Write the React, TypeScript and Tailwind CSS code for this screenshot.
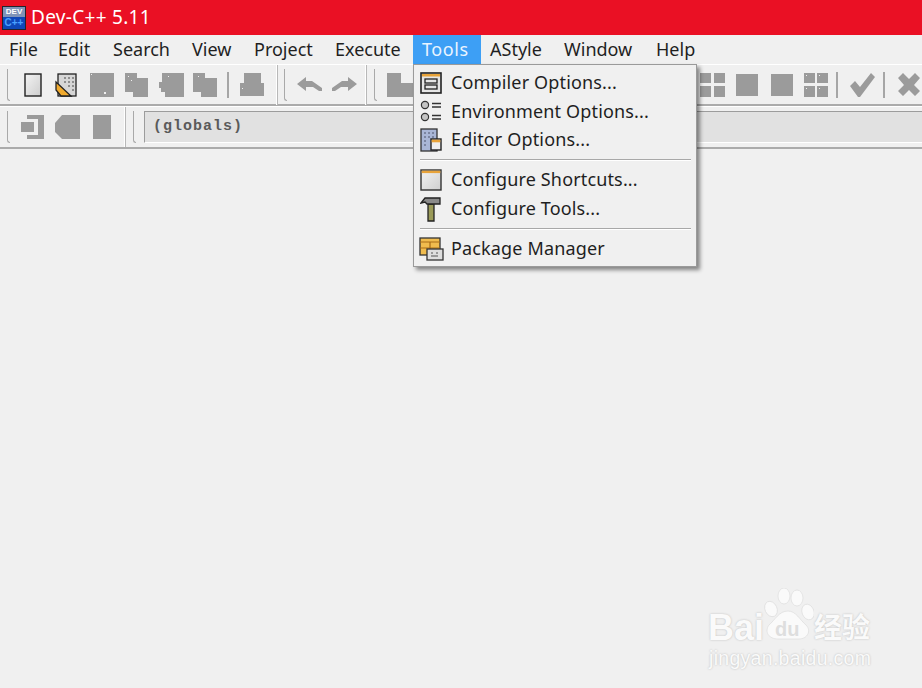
import React from "react";

const G = "#9b9b9b";

function Gray({ w, h = 24, d, ml }: { w: number; h?: number; d: string; ml: string }) {
  return (
    <svg width={w} height={h} viewBox={`0 0 ${w} ${h}`} className={`shrink-0 ${ml}`}>
      <path d={d} fill={G} fillRule="evenodd" />
    </svg>
  );
}

function Grip({ ml = "ml-[7px]" }: { ml?: string }) {
  return <div className={`${ml} w-[3px] h-[32px] shrink-0 border-l border-b border-[#a9a9a9] rounded-bl-sm`} />;
}

function VSep({ ml }: { ml: string }) {
  return <div className={`${ml} w-[2px] h-[26px] bg-[#a6a6a6] shrink-0`} />;
}

function AppIcon() {
  return (
    <div className="w-[24px] h-[24px] shrink-0 bg-[#1b2f6e] border border-[#20242e] flex flex-col items-center overflow-hidden">
      <div className="w-full h-[10px] bg-[#7f93b8] text-white text-[8px] leading-[10px] font-bold text-center font-['Liberation_Sans',sans-serif]">DEV</div>
      <div className="w-full flex-1 bg-[#0f47b8] text-[#4aa0ff] text-[10px] leading-[12px] font-bold text-center font-['Liberation_Sans',sans-serif]">C++</div>
    </div>
  );
}

function IconCompiler() {
  return (
    <svg width="22" height="22" viewBox="0 0 22 22">
      <rect x="1" y="1" width="20" height="20" fill="#e6e6e6" stroke="#222" strokeWidth="1.6" />
      <rect x="2" y="2" width="18" height="2.5" fill="#e8a33a" />
      <rect x="5" y="7" width="12" height="4" fill="none" stroke="#222" strokeWidth="1.3" />
      <rect x="5" y="13" width="12" height="4" fill="none" stroke="#222" strokeWidth="1.3" />
    </svg>
  );
}
function IconEnv() {
  return (
    <svg width="24" height="24" viewBox="0 0 24 24">
      <circle cx="6" cy="6" r="3.6" fill="#c4c4c4" stroke="#333" strokeWidth="1.2" />
      <circle cx="6" cy="18" r="3.6" fill="#c4c4c4" stroke="#333" strokeWidth="1.2" />
      <path d="M13 4.5h9M13 8h9M13 16.5h9M13 20h9" stroke="#333" strokeWidth="1.5" />
    </svg>
  );
}
function IconEditor() {
  return (
    <svg width="22" height="24" viewBox="0 0 22 24">
      <rect x="1" y="1" width="16" height="22" fill="#a9b6d6" stroke="#333" strokeWidth="1.3" />
      <path d="M4 5h2M8 5h2M12 5h2M4 9h2M8 9h2M12 9h2M4 13h2M4 17h2" stroke="#6c7590" strokeWidth="1.4" />
      <rect x="11" y="11" width="10" height="11" fill="#eee" stroke="#222" strokeWidth="1.4" />
      <rect x="11.7" y="11.7" width="8.6" height="2.6" fill="#e8a33a" />
    </svg>
  );
}
function IconWindow() {
  return (
    <svg width="22" height="22" viewBox="0 0 22 22">
      <defs>
        <linearGradient id="wg" x1="0" y1="0" x2="1" y2="1">
          <stop offset="0" stopColor="#f2f2f2" />
          <stop offset="1" stopColor="#cfcfcf" />
        </linearGradient>
      </defs>
      <rect x="1" y="1" width="20" height="20" fill="url(#wg)" stroke="#333" strokeWidth="1.4" />
      <rect x="1.7" y="1.7" width="18.6" height="2.4" fill="#e8a33a" />
    </svg>
  );
}
function IconHammer() {
  return (
    <svg width="22" height="26" viewBox="0 0 22 26">
      <path d="M8 8 H14 V25 H8 Z" fill="#9a9a58" stroke="#222" strokeWidth="1.3" />
      <path d="M1 7 L5 2 H20 V8 H7 L5 6 Z" fill="#8a8a8a" stroke="#222" strokeWidth="1.3" />
    </svg>
  );
}
function IconPackage() {
  return (
    <svg width="25" height="24" viewBox="0 0 25 24">
      <rect x="1" y="1" width="20" height="17" fill="#f0bc4e" stroke="#333" strokeWidth="1.3" />
      <path d="M1 5h20M1 11h20M11 5v13" stroke="#a86c16" strokeWidth="1.2" />
      <rect x="8" y="12" width="16" height="11" fill="#dedede" stroke="#333" strokeWidth="1.3" />
      <path d="M12 16h2M17 16h2M12 19h7" stroke="#555" strokeWidth="1.2" />
    </svg>
  );
}

const items1 = [
  { label: "Compiler Options...", icon: <IconCompiler /> },
  { label: "Environment Options...", icon: <IconEnv /> },
  { label: "Editor Options...", icon: <IconEditor /> },
];
const items2 = [
  { label: "Configure Shortcuts...", icon: <IconWindow /> },
  { label: "Configure Tools...", icon: <IconHammer /> },
];
const items3 = [{ label: "Package Manager", icon: <IconPackage /> }];

function Row({ label, icon }: { label: string; icon: React.ReactNode }) {
  return (
    <div className="h-[28.6px] flex items-center relative">
      <div className="w-[32px] mr-[4px] flex justify-center shrink-0">{icon}</div>
      <span className="text-[#1f1f1f]">{label}</span>
    </div>
  );
}

function MenuSep() {
  return (
    <div className="h-[11.4px] flex flex-col justify-center px-[5px]">
      <div className="h-[1px] bg-[#a8a8a8]" />
      <div className="h-[1px] bg-white" />
    </div>
  );
}

const menus = [
  { t: "File", w: "w-[49px]" },
  { t: "Edit", w: "w-[55px]" },
  { t: "Search", w: "w-[79px]" },
  { t: "View", w: "w-[62px]" },
  { t: "Project", w: "w-[81px]" },
  { t: "Execute", w: "w-[87px]" },
  { t: "Tools", w: "w-[68px]" },
  { t: "AStyle", w: "w-[74px]" },
  { t: "Window", w: "w-[92px]" },
  { t: "Help", w: "w-[60px]" },
];

export default function App() {
  return (
    <div className="relative w-[922px] h-[688px] overflow-hidden bg-[#f0f0f0] font-['Noto_Sans','Open_Sans',sans-serif] text-[18px] text-[#1f1f1f]">
      <div className="h-[35px] bg-[#ea1024] flex items-center pl-[2px]">
        <AppIcon />
        <span className="ml-[5px] text-white text-[19px] tracking-[0.3px]">Dev-C++ 5.11</span>
      </div>

      <div className="h-[29px] flex items-stretch">
        {menus.map((m) => (
          <div
            key={m.t}
            className={
              m.t === "Tools"
                ? `${m.w} pl-[9px] flex items-center bg-[#3d9ff5] text-[#eaf4ff] tracking-[0.6px]`
                : `${m.w} pl-[9px] flex items-center`
            }
          >
            {m.t}
          </div>
        ))}
      </div>

      <div className="h-[42px] flex items-center border-t border-white border-b-2 border-b-[#ababab] relative">
        <Grip />
        <svg width="18" height="24" viewBox="0 0 18 24" className="ml-[14px] shrink-0">
          <defs>
            <linearGradient id="ng" x1="0" y1="0" x2="1" y2="1">
              <stop offset="0" stopColor="#f4f4f4" />
              <stop offset="1" stopColor="#cdcdcd" />
            </linearGradient>
          </defs>
          <rect x="1" y="1" width="16" height="22" fill="url(#ng)" stroke="#222" strokeWidth="1.4" />
        </svg>
        <svg width="22" height="24" viewBox="0 0 22 24" className="ml-[13px] shrink-0">
          <rect x="3" y="1" width="18" height="22" fill="#d6d6d6" stroke="#222" strokeWidth="1.3" />
          <path d="M9 5h2M13 5h2M17 5h2M9 9h2M13 9h2M17 9h2M13 13h2M17 13h2M17 17h2" stroke="#777" strokeWidth="1.3" />
          <path d="M1 9 L16 23 H6 L1 17 Z" fill="#f0aa2e" stroke="#222" strokeWidth="1.3" />
        </svg>
        <Gray w={24} d="M0 0h24v24h-24zM14 19h2v2h-2zM1 1h1v1h-1z" ml="ml-[13px]" />
        <Gray w={24} d="M0 0h12v5h11v19h-15v-5h-8zM6 7h1v1h-1zM3 3h1v1h-1z" ml="ml-[11px]" />
        <Gray w={25} d="M3 0h22v24h-19v-5h-4v-4h-2v-6h3zM9 3h1v1h-1z" ml="ml-[10px]" />
        <Gray w={24} d="M0 0h12v5h12v19h-16v-5h-8zM5 3h1v1h-1z" ml="ml-[9px]" />
        <VSep ml="ml-[10px]" />
        <Gray w={25} d="M4 0h17v10h3v13h-24v-13h4zM2 15h1v1h-1z" ml="ml-[11px]" />
        <div className="ml-[11px] w-[2px] h-[40px] bg-white border-r border-[#b8b8b8] shrink-0" />
        <Grip ml="ml-[6px]" />
        <Gray w={25} h={16} d="M0 7l9-7v4h6l10 7v3h-3l-6-4h-7v4z" ml="ml-[10px]" />
        <Gray w={25} h={16} d="M25 7l-9-7v4h-6l-10 7v3h3l6-4h7v4z" ml="ml-[10px]" />
        <div className="ml-[8px] w-[2px] h-[40px] bg-white border-r border-[#b8b8b8] shrink-0" />
        <Grip ml="ml-[7px]" />
        <Gray w={26} d="M0 0h14v10h12v14h-26z" ml="ml-[10px]" />

        <div className="ml-auto flex items-center shrink-0 mr-[2px]">
          <Gray w={25} d="M0 0h11v10h-11zM14 0h11v10h-11zM0 13h11v11h-11zM14 13h11v11h-11z" ml="ml-0" />
          <Gray w={22} d="M0 1h22v22h-22z" ml="ml-[11px]" />
          <Gray w={22} d="M0 1h22v22h-22z" ml="ml-[13px]" />
          <Gray w={24} d="M0 0h11v10h-11zM2 2h1v1h-1zM13 0h11v10h-11zM15 2h1v1h-1zM0 13h11v11h-11zM2 15h1v1h-1zM13 13h11v11h-11zM15 15h1v1h-1z" ml="ml-[11px]" />
          <VSep ml="ml-[8px]" />
          <Gray w={25} d="M0 13l5-5 5 6 11-14 4 4-15 20h-2z" ml="ml-[12px]" />
          <VSep ml="ml-[8px]" />
          <Gray w={22} d="M0 5l5-5 6 6 6-6 5 5-6 7 6 6-5 5-6-6-6 6-5-5 6-6z" ml="ml-[13px]" />
        </div>
      </div>

      <div className="h-[43px] flex items-center border-t border-white border-b-2 border-b-[#ababab]">
        <Grip />
        <Gray w={23} d="M6 0h17v24h-17v-4h11v-16h-11zM0 7h13v10h-13z" ml="ml-[11px]" />
        <Gray w={25} d="M7 0h18v24h-18l-7-7v-9z" ml="ml-[11px]" />
        <Gray w={18} d="M0 0h18v24h-18z" ml="ml-[13px]" />
        <div className="ml-[13px] w-[2px] h-[40px] bg-white border-r border-[#b8b8b8] shrink-0" />
        <Grip ml="ml-[7px]" />
        <div className="ml-[8px] flex-1 h-[32px] bg-[#e1e1e1] border-t border-l border-[#9c9c9c] border-b border-b-white flex items-center pl-[8px] font-['Liberation_Mono',monospace] font-bold text-[15px] tracking-[1px] text-[#5a5a5a]">
          (globals)
        </div>
      </div>

      {/* Tools dropdown */}
      <div className="absolute left-[413px] top-[64px] w-[284px] h-[203px] bg-[#f0f0f0] border border-[#9a9a9a] pt-[3.5px] shadow-[3px_3px_4px_rgba(0,0,0,0.45)] tracking-[0.15px] pl-[1px]">
        {items1.map((it) => <Row key={it.label} {...it} />)}
        <MenuSep />
        {items2.map((it) => <Row key={it.label} {...it} />)}
        <MenuSep />
        {items3.map((it) => <Row key={it.label} {...it} />)}
      </div>

      {/* Watermark */}
      <div className="absolute left-[706px] top-[588px] w-[170px] h-[84px] text-[#fafafa] font-['Liberation_Sans',sans-serif] [text-shadow:0_0_2px_rgba(170,170,170,0.8)]">
        <span className="absolute left-[2px] top-[18px] text-[36px] leading-[44px] font-bold">Bai</span>
        <svg width="50" height="52" viewBox="0 0 50 52" className="absolute left-[58px] top-0">
          <g fill="#fafafa" stroke="#dddddd" strokeWidth="0.7">
            <ellipse cx="7" cy="21" rx="6" ry="8" transform="rotate(-25 7 21)" />
            <ellipse cx="20" cy="8" rx="6" ry="8" />
            <ellipse cx="33" cy="10" rx="6" ry="8" />
            <ellipse cx="44" cy="24" rx="6" ry="8" transform="rotate(-20 44 24)" />
            <path d="M24 23c8 0 12 9 18 14 6 6 1 14-7 14H14C5 51 0 44 5 37c6-5 10-14 19-14z" />
          </g>
        </svg>
        <span className="absolute left-[69px] top-[29px] text-[20px] leading-[24px] font-bold text-[#dedede] [text-shadow:none]">du</span>
        <span className="absolute left-[108px] top-[21px] text-[28px] leading-[34px] font-['Noto_Sans_CJK_SC',sans-serif] font-bold">经验</span>
        <span className="absolute left-[3px] top-[58px] text-[19.5px] leading-[24px] tracking-[0.3px]">jingyan.baidu.com</span>
      </div>
    </div>
  );
}
